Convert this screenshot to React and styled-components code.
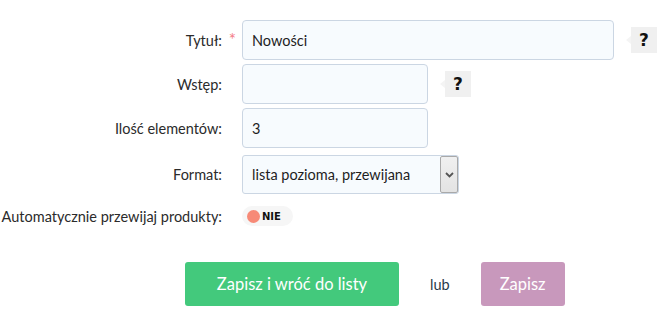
import styled, { createGlobalStyle } from 'styled-components';

const Global = createGlobalStyle`
  body {
    margin: 0;
    background: #fff;
    font-family: 'Lato', 'Noto Sans', sans-serif;
    color: #2b2b2b;
  }
`;

export default function App() {
  return (
    <>
      <Global />
      <Form>
        <Row>
          <Label required>Tytuł:</Label>
          <Field>
            <Input width={372} defaultValue='Nowości' />
            <Help>?</Help>
          </Field>
        </Row>

        <Row>
          <Label>Wstęp:</Label>
          <Field>
            <Input width={186} defaultValue='' />
            <Help>?</Help>
          </Field>
        </Row>

        <Row>
          <Label>Ilość elementów:</Label>
          <Field>
            <Input width={186} defaultValue='3' />
          </Field>
        </Row>

        <Row $top={7}>
          <Label>Format:</Label>
          <Field>
            <SelectBox>
              <Select defaultValue='a'>
                <option value='a'>lista pozioma, przewijana</option>
                <option value='b'>lista pionowa</option>
              </Select>
              <Arrow>
                <svg width='9' height='6' viewBox='0 0 9 6'>
                  <path d='M1 1 L4.5 4.5 L8 1' fill='none' stroke='#555' strokeWidth='1.8' />
                </svg>
              </Arrow>
            </SelectBox>
          </Field>
        </Row>

        <Row $top={12}>
          <Label>Automatycznie przewijaj produkty:</Label>
          <Field>
            <Toggle>
              <Dot />
              NIE
            </Toggle>
          </Field>
        </Row>

        <Actions>
          <Button color='#43c97c' width={214}>Zapisz i wróć do listy</Button>
          <Or>lub</Or>
          <Button color='#c898bc' width={84}>Zapisz</Button>
        </Actions>
      </Form>
    </>
  );
}

// -------------------------------------------------- styling ----------------------------------------------
const Form = styled.div`
  width: 661px;
  padding-top: 20px;
`;

const Row = styled.div`
  display: grid;
  grid-template-columns: 222px 1fr;
  column-gap: 20px;
  align-items: center;
  margin-top: ${({ $top }) => ($top === undefined ? 4 : $top)}px;
  &:first-child {
    margin-top: 0;
  }
`;

const Label = styled.label`
  position: relative;
  text-align: right;
  font-size: 14.5px;
  color: #2b2b2b;
  white-space: nowrap;

  ${({ required }) =>
    required &&
    `
    &::after {
      content: '*';
      position: absolute;
      right: -14px;
      top: -3px;
      color: #f47c85;
      font-size: 17px;
    }
  `}
`;

const Field = styled.div`
  display: flex;
  align-items: center;
  gap: 17px;
`;

const Input = styled.input`
  box-sizing: border-box;
  width: ${({ width }) => width}px;
  height: 40px;
  padding: 0 9px;
  border: 1px solid #cbd6e3;
  border-radius: 4px;
  background: #f7fbfe;
  font-family: inherit;
  font-size: 14.5px;
  color: #1e1e1e;
  outline: none;
`;

const Help = styled.div`
  position: relative;
  width: 26px;
  height: 26px;
  display: flex;
  align-items: center;
  justify-content: center;
  background: #f0f0f0;
  font-family: 'DejaVu Sans', sans-serif;
  font-weight: bold;
  font-size: 17px;
  color: #111;

  &::before {
    content: '';
    position: absolute;
    left: -5px;
    top: 9px;
    border-top: 4px solid transparent;
    border-bottom: 4px solid transparent;
    border-right: 5px solid #f4f4f4;
  }
`;

const SelectBox = styled.div`
  box-sizing: border-box;
  width: 217px;
  height: 39px;
  display: flex;
  align-items: stretch;
  border: 1px solid #cbd6e3;
  border-radius: 3px;
  background: #f7fbfe;
`;

const Select = styled.select`
  flex: 1;
  appearance: none;
  border: none;
  background: transparent;
  padding: 0 9px;
  font-family: inherit;
  font-size: 14.5px;
  color: #1e1e1e;
  outline: none;
`;

const Arrow = styled.div`
  width: 16px;
  display: flex;
  align-items: center;
  justify-content: center;
  background: linear-gradient(#f0f0f0, #e3e3e3);
  border: 1px solid #a9a9a9;
  border-radius: 2px;
`;

const Toggle = styled.div`
  display: flex;
  align-items: center;
  gap: 2px;
  width: 51px;
  height: 20px;
  box-sizing: border-box;
  padding: 0 5px;
  border-radius: 10px;
  background: #f6f6f6;
  font-family: 'DejaVu Sans', sans-serif;
  font-size: 10px;
  font-weight: bold;
  color: #111;
`;

const Dot = styled.span`
  width: 13px;
  height: 13px;
  border-radius: 50%;
  background: #f78a77;
`;

const Actions = styled.div`
  display: flex;
  align-items: center;
  margin-top: 36px;
  padding-left: 185px;
`;

const Button = styled.button`
  width: ${({ width }) => width}px;
  height: 44px;
  border: none;
  border-radius: 3px;
  background: ${({ color }) => color};
  color: #fff;
  font-family: inherit;
  font-size: 16.5px;
  cursor: pointer;
`;

const Or = styled.span`
  margin: 0 31px;
  font-size: 14.5px;
  color: #2a3a4a;
`;
